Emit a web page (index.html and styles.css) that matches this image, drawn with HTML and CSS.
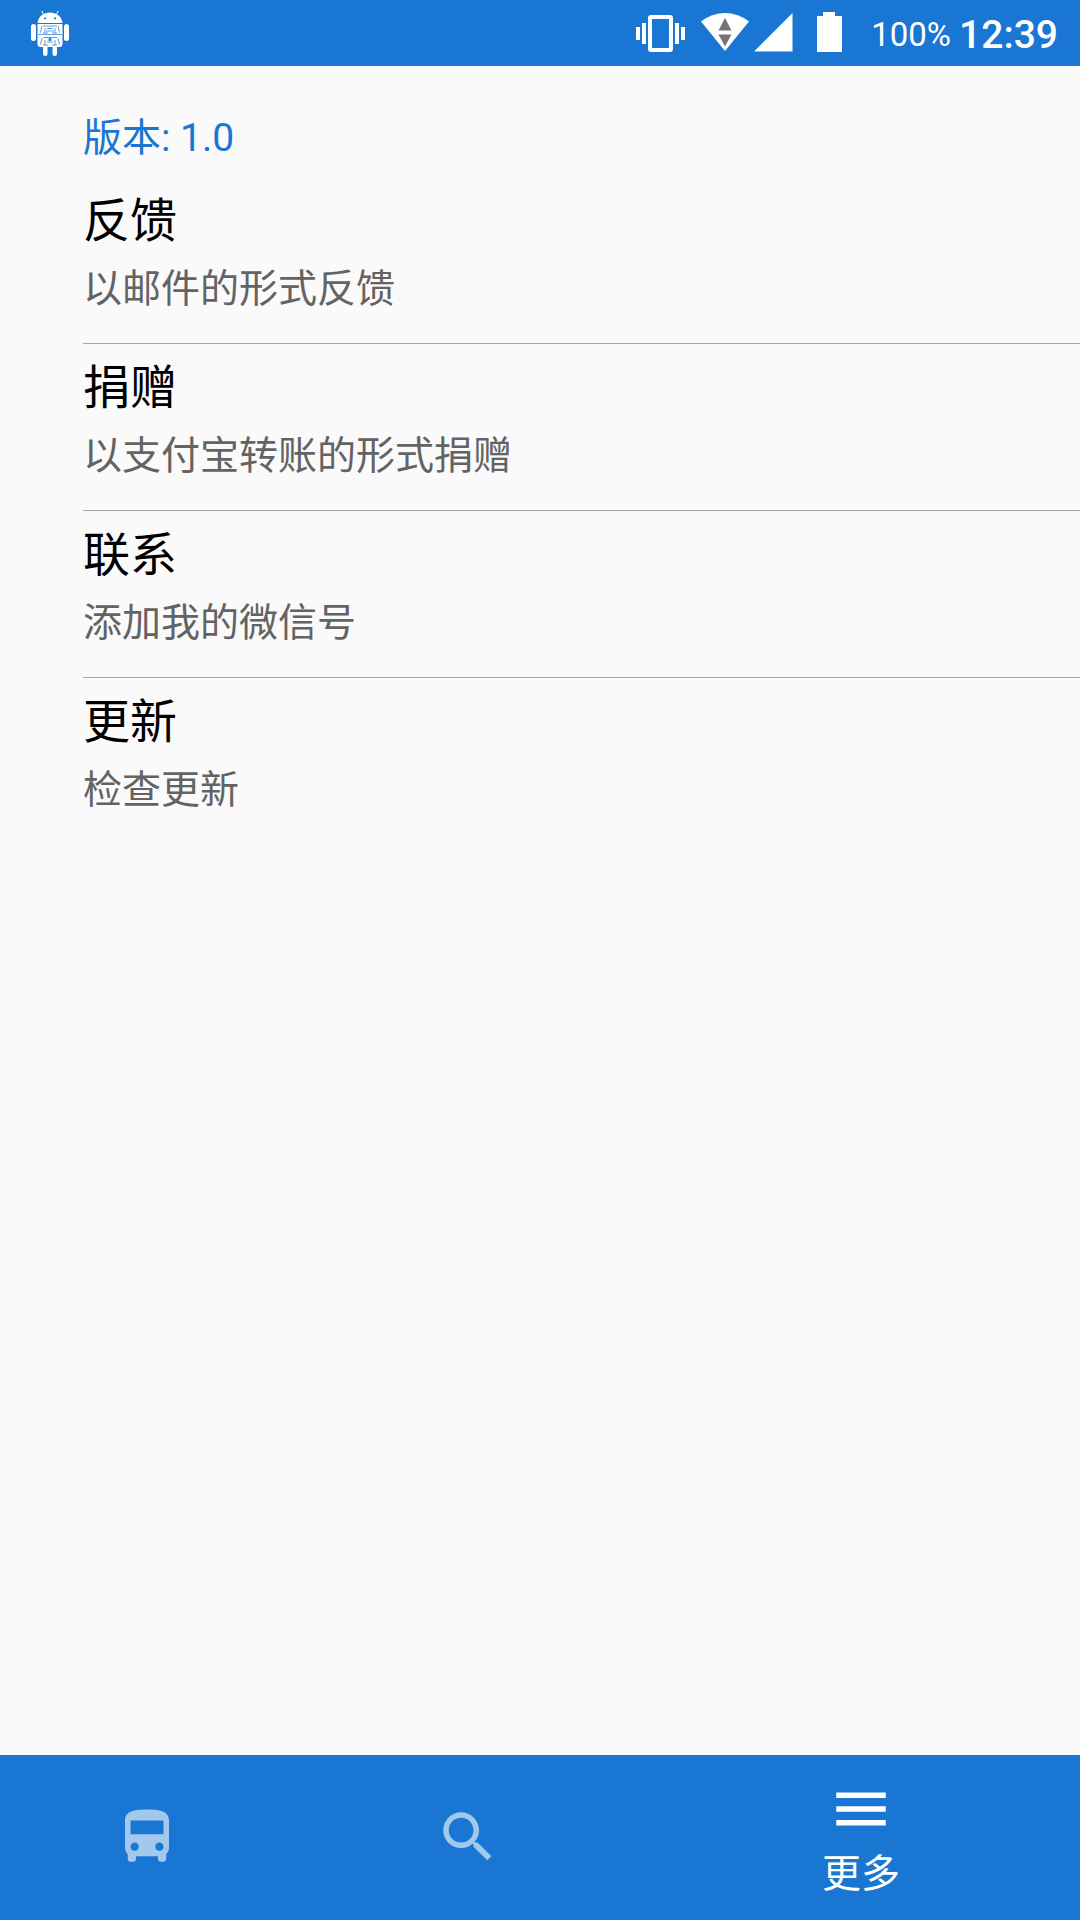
FILE: index.html
```html
<!DOCTYPE html>
<html lang="zh-CN">
<head>
    <meta charset="UTF-8">
    <meta name="viewport" content="width=device-width, initial-scale=1.0">
    <title>更多</title>
    <link rel="stylesheet" href="styles.css">
</head>
<body>
    <header class="status-bar">
        <svg class="icon-robot" width="40" height="46" viewBox="30 10 40 46">
            <g fill="#fff">
                <path d="M37.5 23C38 16.500 44 12.500 50 12.500S62 16.500 62.500 23z"/>
                <path d="M43.500 14.500L41.800 10.800M56.500 14.500L58.200 10.800" stroke="#fff" stroke-width="1"/>
                <path d="M37.500 24H62.500V44Q62.500 47 59.500 47H40.500Q37.500 47 37.500 44z"/>
                <rect x="31" y="24" width="5" height="17" rx="2.500"/>
                <rect x="64" y="24" width="5" height="17" rx="2.500"/>
                <rect x="43" y="44" width="4.500" height="12" rx="2.200"/>
                <rect x="52.500" y="44" width="4.500" height="12" rx="2.200"/>
            </g>
            <circle cx="45" cy="18.300" r="1.100" fill="#1976d2"/>
            <circle cx="55" cy="18.300" r="1.100" fill="#1976d2"/>
            <g fill="none" stroke="#5d9fe0" stroke-width="1">
                <path d="M38 34.500H62M43 26H57M42 26L40.500 32.500M58 26L59.500 32.500M45 28V33M55 28V33M47 28.500H53M46 31H54M43 33H48M52 33H57"/>
                <path d="M43 37.500H48M52 37.500H57M42 38L40.500 44.500M58 38L59.500 44.500M45 40V45M55 40V45M47 42H53M43 45H48M52 45H57"/>
            </g>
            <path d="M48.500 37H51.500V41H48.500z" fill="#3d8bd9"/>
        </svg>
        <div class="status-right">
            <svg width="50" height="40" viewBox="636 13 50 40" fill="#fff">
                <path fill-rule="evenodd" d="M651 15H670Q673 15 673 18V49Q673 52 670 52H651Q648 52 648 49V18Q648 15 651 15zM652 19V48H669V19z"/>
                <path d="M636 27H640V40H636zM642 23H646V44H642zM675 23H679V44H675zM681 27H685V40H681z"/>
            </svg>
            <svg class="icon-wifi" width="50" height="40" viewBox="700 13 50 40">
                <path d="M701 21.500Q712 13 725 13T749 21.500L725 51z" fill="#fff"/>
                <path d="M725 18L731.500 30.500H718.500zM718.500 34.500H731.500L725 46.500z" fill="#757575"/>
            </svg>
            <svg class="icon-signal" width="39" height="40" viewBox="754 13 39 40" fill="#fff">
                <path d="M754 51.500L792.500 13V51.500z"/>
            </svg>
            <svg class="icon-battery" width="25" height="40" viewBox="817 12 25 40" fill="#fff">
                <path d="M823 12H835V16H842V52H817V16H823z"/>
            </svg>
            <span class="battery-text">100%</span>
            <span class="clock">12:39</span>
        </div>
    </header>

    <main class="content">
        <p class="version">版本: 1.0</p>
        <ul class="list">
            <li class="item">
                <h2>反馈</h2>
                <p>以邮件的形式反馈</p>
            </li>
            <li class="item">
                <h2>捐赠</h2>
                <p>以支付宝转账的形式捐赠</p>
            </li>
            <li class="item">
                <h2>联系</h2>
                <p>添加我的微信号</p>
            </li>
            <li class="item">
                <h2>更新</h2>
                <p>检查更新</p>
            </li>
        </ul>
    </main>

    <nav class="bottom-nav">
        <a class="nav-item">
            <svg width="66" height="66" viewBox="0 0 24 24"><path d="M4 16c0 .88.39 1.670 1 2.220V20c0 .55.45 1 1 1h1c.55 0 1-.45 1-1v-1h8v1c0 .55.45 1 1 1h1c.55 0 1-.45 1-1v-1.780c.61-.55 1-1.340 1-2.220V6c0-3.500-3.580-4-8-4s-8 .5-8 4v10zm3.500 1c-.83 0-1.500-.67-1.500-1.500S6.670 14 7.500 14s1.500.67 1.500 1.500S8.330 17 7.500 17zm9 0c-.83 0-1.500-.67-1.500-1.500s.67-1.500 1.500-1.500 1.500.67 1.500 1.500-.67 1.500-1.500 1.500zm1.500-6H6V6h12v5z"/></svg>
        </a>
        <a class="nav-item">
            <svg width="66" height="66" viewBox="0 0 24 24"><path d="M15.500 14h-.79l-.28-.27C15.410 12.590 16 11.110 16 9.500 16 5.910 13.090 3 9.500 3S3 5.910 3 9.500 5.910 16 9.500 16c1.610 0 3.090-.59 4.230-1.570l.27.28v.79l5 4.990L20.490 19l-4.990-5zm-6 0C7.010 14 5 11.990 5 9.500S7.010 5 9.500 5 14 7.010 14 9.500 11.990 14 9.500 14z"/></svg>
        </a>
        <a class="nav-item active">
            <svg width="66" height="66" viewBox="0 0 24 24"><path d="M3 18h18v-2H3v2zm0-5h18v-2H3v2zm0-7v2h18V6H3z"/></svg>
            <span>更多</span>
        </a>
    </nav>
</body>
</html>
```

FILE: styles.css
```css
* { box-sizing: border-box; margin: 0; padding: 0; }
body { display: flex; flex-direction: column; height: 1920px; background: #fafafa; font-family: Roboto, "Noto Sans CJK SC", sans-serif; }
svg { display: block; flex: none; }

.status-bar { display: flex; justify-content: space-between; height: 66px; padding: 10px 22px 0 30px; background: #1976d2; color: #fff; }
.status-right { display: flex; align-items: flex-start; }
.status-right svg { margin-top: 3px; }
.status-right .icon-wifi { margin-left: 14px; }
.status-right .icon-signal { margin-left: 4px; }
.status-right .icon-battery { margin-top: 2px; margin-left: 24px; }
.battery-text { margin: 5px 0 0 29px; font-size: 33px; line-height: 40px; }
.clock { margin: 2px 0 0 8px; font-size: 39px; font-weight: 500; line-height: 46px; }

.content { flex: 1; padding: 44px 0 0 83px; }
.version { height: 67px; font-size: 39px; line-height: 56px; color: #1976d2; }
.list { list-style: none; }
.item { height: 167px; padding-top: 10px; border-bottom: 1px solid #a6a6a6; }
.item:last-child { border-bottom: none; }
.item h2 { font-size: 47px; font-weight: 400; line-height: 68px; color: #000; }
.item p { font-size: 39px; line-height: 68px; color: #636363; }

.bottom-nav { display: grid; grid-template-columns: 294px 348px 1fr; height: 165px; background: #1976d2; }
.nav-item { display: flex; flex-direction: column; align-items: center; padding-top: 49px; color: #fff; }
.nav-item svg { fill: #a3c8ed; }
.nav-item.active { padding-top: 21px; }
.nav-item.active svg { fill: #fff; }
.nav-item span { margin-top: 4px; font-size: 39px; line-height: 56px; }
```
